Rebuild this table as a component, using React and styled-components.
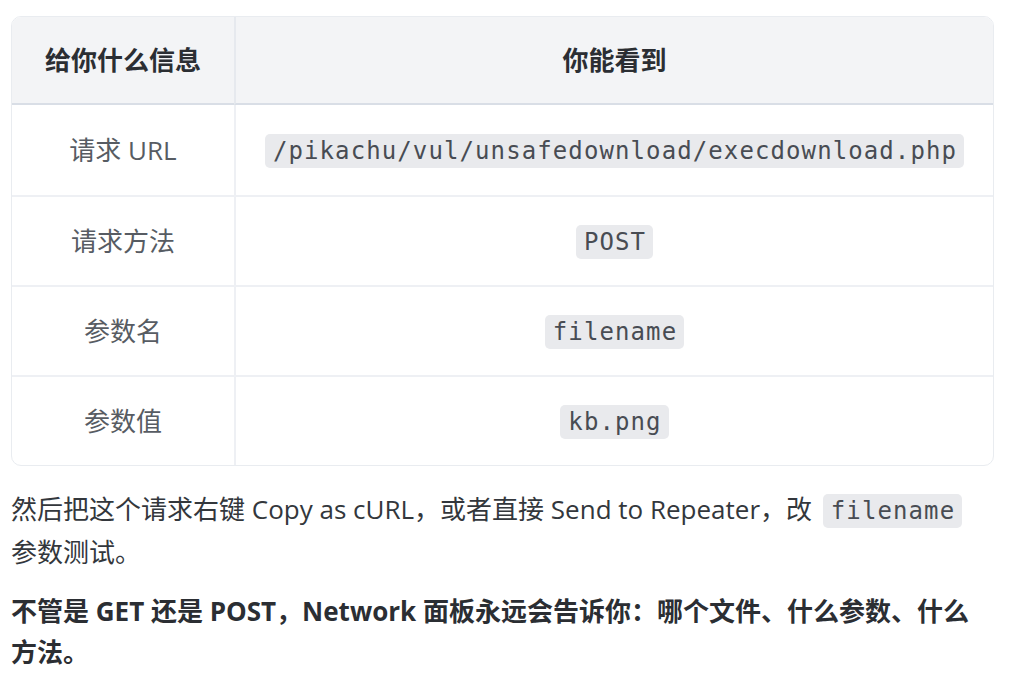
import React from 'react'
import styled, { createGlobalStyle } from 'styled-components'

const GlobalStyle = createGlobalStyle`
    html, body {
        margin: 0;
        padding: 0;
        background: #ffffff;
    }
    body {
        font-family: "Open Sans", "Noto Sans CJK SC", sans-serif;
    }
`

const Page = styled.div`
    width: 983px;
    padding: 16px 0 0 11px;
    color: #2f3338;
    font-size: 26px;
    line-height: 41px;
`

const Table = styled.table`
    width: 100%;
    border-collapse: separate;
    border-spacing: 0;
    border: 1px solid #e9ecf0;
    border-radius: 10px;
    overflow: hidden;
    table-layout: fixed;
`

const HeadCell = styled.th`
    box-sizing: border-box;
    height: 88px;
    padding: 0 16px;
    background: #f3f4f6;
    color: #2b2e33;
    font-weight: 700;
    text-align: center;
    border-bottom: 2px solid #d9dee6;
    border-left: ${p => (p.$first ? 'none' : '2px solid #e6e9ee')};
    width: ${p => (p.$first ? '222px' : 'auto')};
`

const Cell = styled.td`
    box-sizing: border-box;
    height: 90px;
    padding: 0 8px;
    color: #575c63;
    text-align: center;
    vertical-align: middle;
    border-top: ${p => (p.$top ? 'none' : '2px solid #eef0f4')};
    border-left: ${p => (p.$first ? 'none' : '2px solid #eef0f4')};
`

const Code = styled.code`
    font-family: "DejaVu Sans Mono", monospace;
    font-size: 24px;
    letter-spacing: 1.1px;
    background: #e9eaed;
    color: #484c53;
    border-radius: 5px;
    padding: 3px 7px 3px 8px;
    margin: ${p => (p.$inline ? '0 4px' : '0')};
`

const Para = styled.p`
    margin: ${p => (p.$first ? '23px 0 0' : '18px 0 0')};
    font-weight: ${p => (p.$bold ? 700 : 400)};
    color: ${p => (p.$bold ? '#2b2e33' : '#33373c')};
`

const rows = [
    ['请求 URL', '/pikachu/vul/unsafedownload/execdownload.php'],
    ['请求方法', 'POST'],
    ['参数名', 'filename'],
    ['参数值', 'kb.png'],
]

export default function App() {
    return (
        <Page>
            <GlobalStyle />
            <Table>
                <thead>
                    <tr>
                        <HeadCell $first>给你什么信息</HeadCell>
                        <HeadCell>你能看到</HeadCell>
                    </tr>
                </thead>
                <tbody>
                    {rows.map(([label, value], i) => (
                        <tr key={label}>
                            <Cell $first $top={i === 0}>{label}</Cell>
                            <Cell $top={i === 0}><Code>{value}</Code></Cell>
                        </tr>
                    ))}
                </tbody>
            </Table>
            <Para $first>
                然后把这个请求右键 Copy as cURL，或者直接 Send to Repeater，改 <Code $inline>filename</Code> 参数测试。
            </Para>
            <Para $bold>
                不管是 GET 还是 POST，Network 面板永远会告诉你：哪个文件、什么参数、什么方法。
            </Para>
        </Page>
    )
}
